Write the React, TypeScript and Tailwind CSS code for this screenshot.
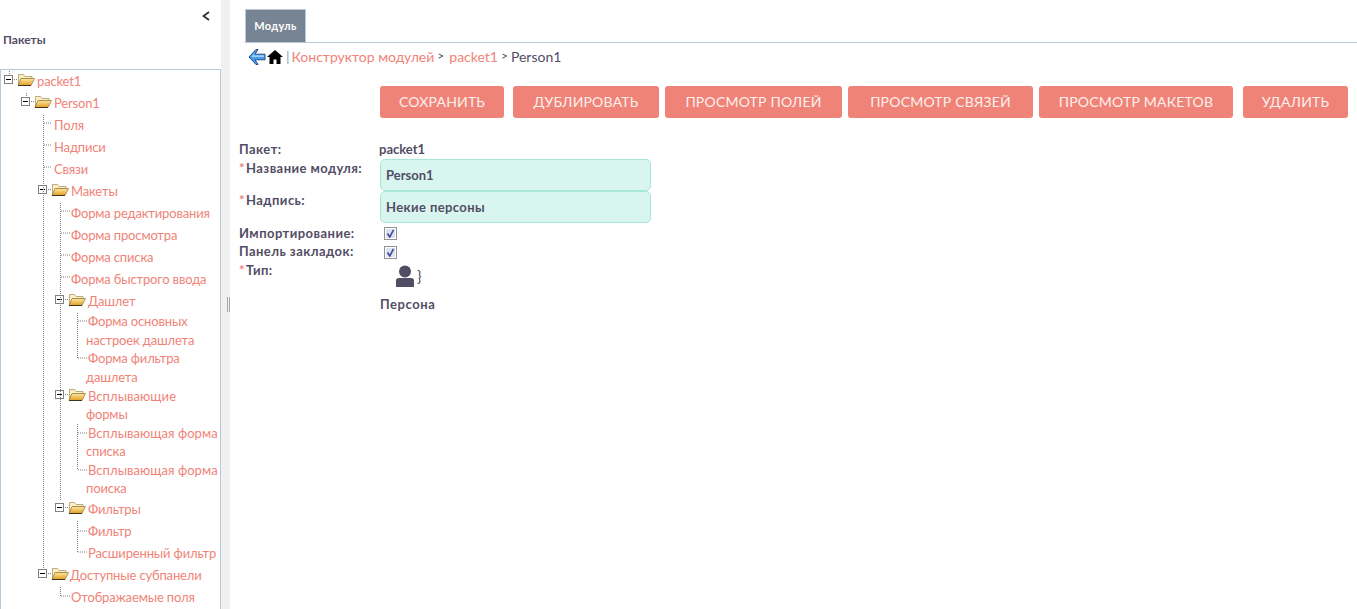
import React from "react";

const FONT = "font-['Lato','Liberation_Sans',sans-serif]";

function TreeIcon({ id }: { id: string }) {
  return (
    <svg width="33" height="14" viewBox="0 0 33 14" className="inline-block align-[-1px]">
      <defs>
        <linearGradient id={id} x1="0" y1="0" x2="0" y2="1">
          <stop offset="0" stopColor="#fde8a0" />
          <stop offset="1" stopColor="#e39c22" />
        </linearGradient>
      </defs>
      <rect x="0.5" y="2.5" width="8" height="8" fill="#fff" stroke="#808080" />
      <rect x="2" y="6" width="5" height="1" fill="#000" />
      <line x1="10" y1="6.5" x2="14" y2="6.5" stroke="#808080" strokeDasharray="1 1" />
      <path d="M14.5 1.5 h5 l1.5 2 h7 v2 h-10 l-3.5 7 z" fill="#fdf0c4" stroke="#a89868" strokeWidth="0.8" />
      <path d="M17 5.5 h13.5 l-3.6 7 h-12.9 z" fill={`url(#${id})`} stroke="#9a7c3a" strokeWidth="0.8" />
      <path d="M14 12.5 h13" stroke="#3e3420" strokeWidth="1" />
    </svg>
  );
}

function Row({ h, cls, folder, children }: { h: string; cls: string; folder?: string; children: React.ReactNode }) {
  return (
    <div className={`${h} ${cls} text-[#f08377] tracking-[-0.15px]`}>
      {folder && <TreeIcon id={folder} />}
      {children}
    </div>
  );
}

function Lines() {
  const dotted = [
    "M8.5 1v4", "M25.5 23v4",
    "M42.5 45v454", "M43 53h8", "M43 75h8", "M43 97h8",
    "M59.5 133v297", "M60 141h9", "M60 163h9", "M60 185h9", "M60 207h9",
    "M76.5 243v45", "M77 251h9", "M77 288h9",
    "M76.5 354v46", "M77 363h9", "M77 400h9",
    "M76.5 451v31", "M77 461h9", "M77 482h9",
    "M59.5 517v9", "M60 526h9",
  ];
  return (
    <svg width="219" height="539" className="absolute left-0 top-0 pointer-events-none">
      {dotted.map((d) => (
        <path key={d} d={d} stroke="#808080" strokeWidth="1" strokeDasharray="1 1" fill="none" />
      ))}
    </svg>
  );
}

function Wide({ children }: { children: React.ReactNode }) {
  return <span className="tracking-[0.05px]">{children}</span>;
}

function Tree() {
  const r = "h-[22px] leading-[22px] whitespace-nowrap";
  const w = "h-[37.2px] leading-[18.6px]";
  return (
    <div className="relative border-t border-x border-[#b8c8d8] flex-1 text-[13px] overflow-hidden">
      <Lines />
      <Row h={r} cls="pl-[3px]" folder="f1">packet1</Row>
      <Row h={r} cls="pl-[20px]" folder="f2">Person1</Row>
      <Row h={r} cls="pl-[53px]">Поля</Row>
      <Row h={r} cls="pl-[53px]">Надписи</Row>
      <Row h={r} cls="pl-[53px]">Связи</Row>
      <Row h={r} cls="pl-[37px]" folder="f3">Макеты</Row>
      <Row h={r} cls="pl-[70px]">Форма редактирования</Row>
      <Row h={r} cls="pl-[70px]">Форма просмотра</Row>
      <Row h={r} cls="pl-[70px]">Форма списка</Row>
      <Row h={r} cls="pl-[70px]">Форма быстрого ввода</Row>
      <Row h={r} cls="pl-[54px]" folder="f4">Дашлет</Row>
      <Row h={w} cls="pl-[85px] indent-[2px]">Форма основных<br />настроек дашлета</Row>
      <Row h={w} cls="pl-[85px] indent-[2px]">Форма фильтра<br />дашлета</Row>
      <Row h="h-[37.2px] leading-[18px] pt-[1px]" cls="pl-[85px] -indent-[31px]" folder="f5"><Wide>Всплывающие</Wide><br />формы</Row>
      <Row h={w} cls="pl-[85px] indent-[2px]"><Wide>Всплывающая форма</Wide><br />списка</Row>
      <Row h={w} cls="pl-[85px] indent-[2px]"><Wide>Всплывающая форма</Wide><br />поиска</Row>
      <Row h={r} cls="pl-[54px]" folder="f6">Фильтры</Row>
      <Row h={r} cls="pl-[87px]">Фильтр</Row>
      <Row h={r} cls="pl-[87px]">Расширенный фильтр</Row>
      <Row h={r} cls="pl-[37px]" folder="f7"><span className="-ml-px">Доступные субпанели</span></Row>
      <Row h={r} cls="pl-[70px]">Отображаемые поля</Row>
    </div>
  );
}

function Sidebar() {
  return (
    <aside className="w-[221px] shrink-0 flex flex-col h-full">
      <div className="h-[69px] shrink-0 flex flex-col">
        <div className="h-[31px] pt-[10px] pr-[11px] flex justify-end">
          <svg width="8" height="10" viewBox="0 0 8 10" className="mt-[1px]">
            <path d="M7 1 L1.5 5 L7 9" stroke="#333" strokeWidth="1.8" fill="none" />
          </svg>
        </div>
        <div className="pl-[3px] text-[12px] font-bold leading-[18px] text-[#534d64]">Пакеты</div>
      </div>
      <Tree />
    </aside>
  );
}

function Splitter() {
  return (
    <div className="w-[9px] shrink-0 bg-[#f0f0f0] h-full flex items-center justify-end">
      <div className="w-[3px] h-[15px] border-x border-[#a8a8a8]" />
    </div>
  );
}

function Btn({ cls, children }: { cls: string; children: React.ReactNode }) {
  return (
    <button className={`${cls} h-[32px] pb-[1px] bg-[#f08377] rounded-[3px] text-[14px] text-[#fdf0ed] tracking-[0.2px] text-center`}>
      {children}
    </button>
  );
}

function Check() {
  return (
    <svg width="13" height="13" viewBox="0 0 13 13" className="ml-[4px]">
      <rect x="0.5" y="0.5" width="12" height="12" fill="#fff" stroke="#929292" />
      <rect x="2" y="2" width="9" height="9" fill="#dde1f2" />
      <path d="M3.5 6.5 L5.8 10 L9.5 2.8" stroke="#3f4a9a" strokeWidth="1.6" fill="none" />
    </svg>
  );
}

function Label({ req, cls, children }: { req?: boolean; cls: string; children: React.ReactNode }) {
  return (
    <div className={`${cls} font-bold text-[13px] text-[#534d64] tracking-[0.45px] whitespace-nowrap`}>
      {req && <span className="text-[#f08377] mr-[1px]">*</span>}
      {children}
    </div>
  );
}

function Field({ cls, children }: { cls?: string; children: React.ReactNode }) {
  return (
    <div className={`${cls ?? ""} h-[32px] w-[271px] bg-[#d8f5ef] border border-[#a5e8d5] rounded-[5px] pl-[5px] leading-[30px] font-bold text-[13px] text-[#534d64]`}>
      {children}
    </div>
  );
}

function Main() {
  return (
    <main className="flex-1 min-w-0 pl-[15px] pt-[9px]">
      <div className="border-b border-[#b8c8d8] h-[34px] flex">
        <div className="w-[61px] h-[33px] bg-[#778493] border-t border-x border-[#b8c8d8] text-white font-bold text-[11px] tracking-[0.4px] flex items-center justify-center">
          Модуль
        </div>
      </div>
      <div className="h-[26px] flex items-center pl-[3px] text-[14px] whitespace-nowrap">
        <svg width="18" height="16" viewBox="0 0 18 16" className="mt-[2px]">
          <path d="M8 0.5 L1 8 L8 15.5 H10 L7 10.8 H17 V5.2 H7 L10 0.5 Z" fill="#4a9be8" stroke="#1d4f8c" strokeWidth="1" />
          <path d="M7 4 L3.5 8 H16 V6.2 H6 Z" fill="#9fd0fa" />
        </svg>
        <svg width="16" height="14" viewBox="0 0 16 14" className="ml-[1px] mt-[2px]">
          <path d="M8 0 L16 7 H13.5 V14 H9.5 V9.5 H6.5 V14 H2.5 V7 H0 Z" fill="#000" />
        </svg>
        <span className="text-[#7fa8c8] ml-[3px]">|</span>
        <span className="text-[#f08377] ml-[2px]">Конструктор модулей</span>
        <span className="text-[#534d64] text-[12px] ml-[3px]">&gt;</span>
        <span className="text-[#f08377] ml-[5px]">packet1</span>
        <span className="text-[#534d64] text-[12px] ml-[3px]">&gt;</span>
        <span className="text-[#534d64] ml-[3px]">Person1</span>
      </div>
      <div className="flex mt-[17px] ml-[135px]">
        <Btn cls="w-[124px]">СОХРАНИТЬ</Btn>
        <Btn cls="w-[146px] ml-[9px]">ДУБЛИРОВАТЬ</Btn>
        <Btn cls="w-[177px] ml-[6px]">ПРОСМОТР ПОЛЕЙ</Btn>
        <Btn cls="w-[185px] ml-[6px]">ПРОСМОТР СВЯЗЕЙ</Btn>
        <Btn cls="w-[194px] ml-[6px]">ПРОСМОТР МАКЕТОВ</Btn>
        <Btn cls="w-[105px] ml-[10px]">УДАЛИТЬ</Btn>
      </div>
      <div className="grid grid-cols-[141px_271px] -ml-[6px] mt-[22px] text-[13px]">
        <Label cls="h-[19px] leading-[19px]">Пакет:</Label>
        <div className="h-[19px] leading-[19px] font-bold text-[#534d64] -ml-px">packet1</div>
        <Label req cls="leading-[19px]">Название модуля:</Label>
        <Field>Person1</Field>
        <Label req cls="leading-[19px]">Надпись:</Label>
        <Field cls="tracking-[0.4px]">Некие персоны</Field>
        <Label cls="h-[19px] leading-[19px] mt-[1px]">Импортирование:</Label>
        <div className="h-[19px] mt-[1px] flex items-center"><Check /></div>
        <Label cls="h-[19px] leading-[17px]">Панель закладок:</Label>
        <div className="h-[19px] flex items-center"><Check /></div>
        <Label req cls="leading-[17px]">Тип:</Label>
        <div className="text-[#534d64] font-bold">
          <div className="h-[33px] pl-[16px] pt-[3px] flex items-start">
            <svg width="18" height="23" viewBox="0 0 18 23">
              <circle cx="9" cy="6.5" r="6" fill="#534d64" />
              <path d="M0 22 V15.5 Q0 13 3 13 H15 Q18 13 18 15.5 V22 Z" fill="#534d64" />
            </svg>
            <span className="font-normal text-[15px] leading-[14px] ml-[3px] mt-[4px]">{"}"}</span>
          </div>
          <div className="leading-[19px] tracking-[0.55px]">Персона</div>
        </div>
      </div>
    </main>
  );
}

export default function App() {
  return (
    <div className={`${FONT} w-[1357px] h-[609px] overflow-hidden bg-white flex`}>
      <Sidebar />
      <Splitter />
      <Main />
    </div>
  );
}
